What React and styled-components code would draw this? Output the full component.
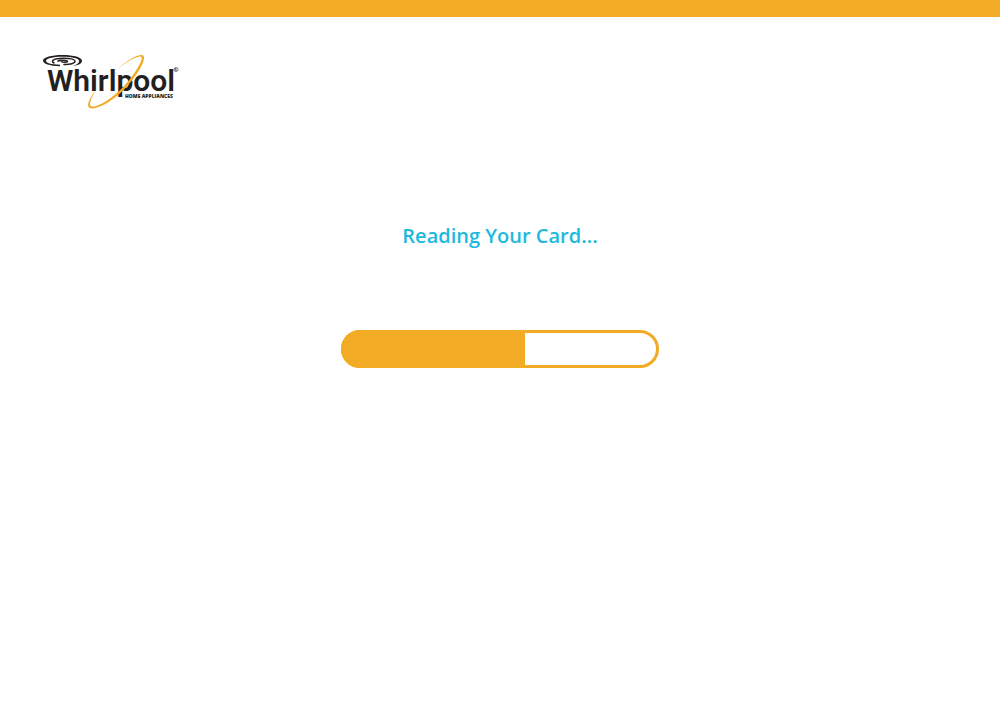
import React from "react";
import styled, { createGlobalStyle } from "styled-components";

const GlobalStyle = createGlobalStyle`
  * { box-sizing: border-box; }
  body { margin: 0; background: #fff; font-family: "Open Sans", sans-serif; }
`;

const Page = styled.div`
  min-height: 100vh;
  border-top: 17px solid #f1ab24;
`;

const Header = styled.header`
  display: flex;
  padding: 36px 40px 0;
`;

const Logo = styled.svg`
  display: block;
  width: 142px;
  height: 58px;
`;

const Wordmark = styled.text`
  font-family: Roboto, sans-serif;
  font-weight: 600;
  font-size: 30px;
  fill: #231f20;
`;

const Tagline = styled.text`
  font-family: "Open Sans", sans-serif;
  font-weight: 800;
  font-size: 5px;
  fill: #231f20;
`;

const Main = styled.main`
  display: flex;
  flex-direction: column;
  align-items: center;
  gap: 80px;
  padding: 111px 24px 24px;
`;

const Status = styled.h1`
  margin: 0;
  font-size: 20px;
  line-height: 28px;
  font-weight: 600;
  color: #1cb9de;
`;

const Track = styled.div`
  width: 100%;
  max-width: 318px;
  height: 38px;
  border: 3px solid #f1ab24;
  border-radius: 19px;
`;

const Fill = styled.div`
  width: calc(${({ $value }) => $value}% + 3px);
  height: 38px;
  margin: -3px 0 0 -3px;
  border-radius: 19px 0 0 19px;
  background: #f1ab24;
`;

function WhirlpoolLogo() {
  return (
    <Logo viewBox="40 53 142 58" role="img" aria-label="Whirlpool Home Appliances">
      <path
        fill="#231f20"
        fillRule="evenodd"
        d="M62.500 55C74 55 82 57.400 82 60.800C82 63.400 78.500 65.400 72.500 66.200C77 64.800 79.200 63 79.200 61C79.200 58.500 72.500 56.700 62.500 56.700C52.500 56.700 46 58.400 46 60.800C46 63 51 64.500 60 64.800L60 66.300C49.500 66 43 63.800 43 60.600C43 57.300 51.500 55 62.500 55Z"
      />
      <path
        fill="none"
        stroke="#231f20"
        strokeWidth="1.500"
        strokeLinecap="round"
        d="M54 63C50 61 54 58.200 63 58.200C70 58.200 75 59.300 75 61.300C75 63.300 70 64.700 64 64.500M58 61.300C59 59.900 67 59.800 67.500 61.300C67.500 62.500 63 62.700 61.500 61.700"
      />
      <Wordmark x="47" y="91">Whirlpool</Wordmark>
      <path
        fill="#f1ab24"
        d="M117 69.500C127 60.500 138 54.200 142.500 55.200C147.500 56.300 140 72 127 86.500C113 102 95 111 89.300 107.700C86.300 105.800 89 98.500 95.500 91C91 98.500 88.500 104.800 91 106.200C95.500 108.500 112 99.500 125 85C137 71.500 143.800 58 141.200 56.700C138.500 55.300 128 60.500 117 69.500Z"
      />
      <Tagline x="125" y="98">HOME APPLIANCES</Tagline>
      <circle cx="176" cy="69.500" r="2" fill="none" stroke="#231f20" strokeWidth=".6" />
      <path d="M175.400 70.700V68.500H176.100Q176.900 69.100 176.100 69.600H175.500M176 69.600L176.700 70.700" fill="none" stroke="#231f20" strokeWidth=".5" />
    </Logo>
  );
}

export default function App() {
  const progress = 58;
  return (
    <>
      <GlobalStyle />
      <Page>
        <Header>
          <WhirlpoolLogo />
        </Header>
        <Main>
          <Status>Reading Your Card...</Status>
          <Track
            role="progressbar"
            aria-label="Reading your card"
            aria-valuemin={0}
            aria-valuemax={100}
            aria-valuenow={progress}
          >
            <Fill $value={progress} />
          </Track>
        </Main>
      </Page>
    </>
  );
}
